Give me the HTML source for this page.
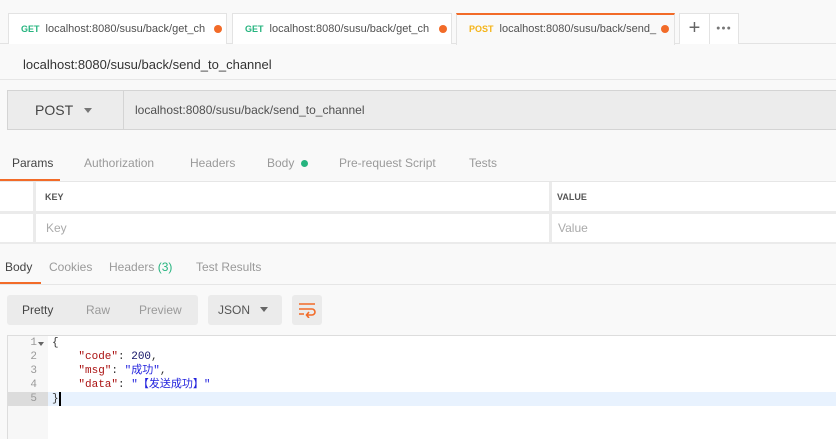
<!DOCTYPE html>
<html><head><meta charset="utf-8"><style>
*{box-sizing:border-box;margin:0;padding:0}
body{width:836px;height:439px;overflow:hidden;background:#f9f9f9;font-family:"Liberation Sans","Noto Sans CJK SC",sans-serif;position:relative;color:#505050}
.a{position:absolute}
.tab{position:absolute;top:13px;height:31px;background:#fff;border:1px solid #e3e3e3;border-bottom:none;font-size:11px;line-height:30px;white-space:nowrap;overflow:hidden}
.m{font-weight:bold;font-size:9px;margin:0 6px 0 12px}
.dot{position:absolute;width:8px;height:8px;border-radius:50%;background:#f26b28;top:11px}
.t{font-size:12px;color:#9a9a9a;position:absolute}
.mono{font-family:"Liberation Mono","Noto Sans CJK SC",monospace;font-size:11px;line-height:14px}
</style></head><body>
<div class="a" style="left:0;top:43px;width:836px;height:1px;background:#e3e3e3"></div>
<div class="tab" style="left:8px;width:219px"><span class="m" style="color:#26b47f">GET</span><span style="color:#505050">localhost:8080/susu/back/get_ch</span><span class="dot" style="left:205px"></span></div>
<div class="tab" style="left:232px;width:220px"><span class="m" style="color:#26b47f">GET</span><span>localhost:8080/susu/back/get_ch</span><span class="dot" style="left:206px"></span></div>
<div class="tab" style="left:456px;width:219px;border-top:2px solid #f26b28;height:32px;top:13px;background:#f9f9f9;line-height:28px"><span class="m" style="color:#f5b418">POST</span><span>localhost:8080/susu/back/send_</span><span class="dot" style="left:204px;top:10px"></span></div>
<div class="tab" style="left:679px;width:31px;text-align:center;font-size:20px;color:#666;line-height:28px">+</div>
<div class="tab" style="left:709px;width:30px;text-align:center;font-size:7px;color:#777;letter-spacing:1px">●●●</div>
<div class="a" style="left:23px;top:57px;font-size:13px;color:#333">localhost:8080/susu/back/send_to_channel</div>
<div class="a" style="left:0;top:79px;width:836px;height:1px;background:#e6e6e6"></div>
<div class="a" style="left:7px;top:90px;width:829px;height:40px;background:#ececec;border:1px solid #d4d4d4;border-right:none"></div>
<div class="a" style="left:123px;top:91px;width:1px;height:38px;background:#d4d4d4"></div>
<div class="a" style="left:35px;top:102px;font-size:14px;color:#444">POST</div>
<div class="a" style="left:84px;top:108px;border:4px solid transparent;border-top:5px solid #777"></div>
<div class="a" style="left:135px;top:103px;font-size:12px;color:#505050">localhost:8080/susu/back/send_to_channel</div>
<div class="t" style="left:12px;top:156px;color:#444">Params</div>
<div class="t" style="left:84px;top:156px">Authorization</div>
<div class="t" style="left:190px;top:156px">Headers</div>
<div class="t" style="left:267px;top:156px">Body</div>
<div class="a" style="left:301px;top:160px;width:7px;height:7px;border-radius:50%;background:#26b47f"></div>
<div class="t" style="left:339px;top:156px">Pre-request Script</div>
<div class="t" style="left:469px;top:156px">Tests</div>
<div class="a" style="left:0;top:179px;width:60px;height:3px;background:#f26b28"></div>
<div class="a" style="left:0;top:181px;width:836px;height:1px;background:#e6e6e6"></div>
<div class="a" style="left:0;top:182px;width:836px;height:62px;background:#ebebeb"></div>
<div class="a" style="left:0;top:182px;width:33px;height:29px;background:#fff"></div>
<div class="a" style="left:36px;top:182px;width:513px;height:29px;background:#fff"></div>
<div class="a" style="left:552px;top:182px;width:284px;height:29px;background:#fff"></div>
<div class="a" style="left:0;top:214px;width:33px;height:28px;background:#fff"></div>
<div class="a" style="left:36px;top:214px;width:513px;height:28px;background:#fff"></div>
<div class="a" style="left:552px;top:214px;width:284px;height:28px;background:#fff"></div>
<div class="a" style="left:45px;top:192px;font-size:9px;font-weight:bold;color:#555">KEY</div>
<div class="a" style="left:557px;top:192px;font-size:9px;font-weight:bold;color:#555">VALUE</div>
<div class="a" style="left:46px;top:221px;font-size:12px;color:#aaa">Key</div>
<div class="a" style="left:558px;top:221px;font-size:12px;color:#aaa">Value</div>
<div class="t" style="left:5px;top:260px;color:#444">Body</div>
<div class="t" style="left:49px;top:260px">Cookies</div>
<div class="t" style="left:109px;top:260px">Headers <span style="color:#26b47f">(3)</span></div>
<div class="t" style="left:196px;top:260px">Test Results</div>
<div class="a" style="left:0;top:282px;width:41px;height:3px;background:#f26b28"></div>
<div class="a" style="left:0;top:284px;width:836px;height:1px;background:#e6e6e6"></div>
<div class="a" style="left:7px;top:295px;width:191px;height:30px;background:#ebebeb;border-radius:3px"></div>
<div class="t" style="left:22px;top:303px;color:#444">Pretty</div>
<div class="t" style="left:86px;top:303px">Raw</div>
<div class="t" style="left:139px;top:303px">Preview</div>
<div class="a" style="left:208px;top:295px;width:74px;height:30px;background:#ebebeb;border-radius:3px"></div>
<div class="t" style="left:218px;top:303px;color:#555">JSON</div>
<div class="a" style="left:260px;top:307px;border:4px solid transparent;border-top:5px solid #666"></div>
<div class="a" style="left:292px;top:295px;width:30px;height:30px;background:#ebebeb;border-radius:3px"></div>
<svg class="a" style="left:298px;top:302px" width="18" height="16" viewBox="0 0 18 16" fill="none" stroke="#f26b28" stroke-width="1.6"><path d="M1 2h16M1 7h13a3 3 0 0 1 0 6H9M1 12h5M11 10l-2.5 3 2.5 3"/></svg>
<div class="a" style="left:7px;top:335px;width:829px;height:104px;background:#fff;border-top:1px solid #ddd;border-left:1px solid #ddd"></div>
<div class="a" style="left:8px;top:336px;width:40px;height:103px;background:#f7f7f7"></div>
<div class="a" style="left:48px;top:392px;width:788px;height:14px;background:#e8f2fe"></div>
<div class="a" style="left:8px;top:392px;width:40px;height:14px;background:#dcdcdc"></div>
<div class="a mono" style="left:8px;top:336px;width:29px;text-align:right;color:#999">1<br>2<br>3<br>4<br>5</div>
<div class="a" style="left:38px;top:342px;border:3px solid transparent;border-top:4px solid #666"></div>
<div class="a mono" style="left:52px;top:336px;color:#333;white-space:pre"><span>{</span>
    <span style="color:#a11">"code"</span>: <span style="color:#116">200</span>,
    <span style="color:#a11">"msg"</span>: <span style="color:#22d">"成功"</span>,
    <span style="color:#a11">"data"</span>: <span style="color:#22d">"【发送成功】"</span>
}</div>
<div class="a" style="left:59px;top:392px;width:2px;height:14px;background:#000"></div>
</body></html>
